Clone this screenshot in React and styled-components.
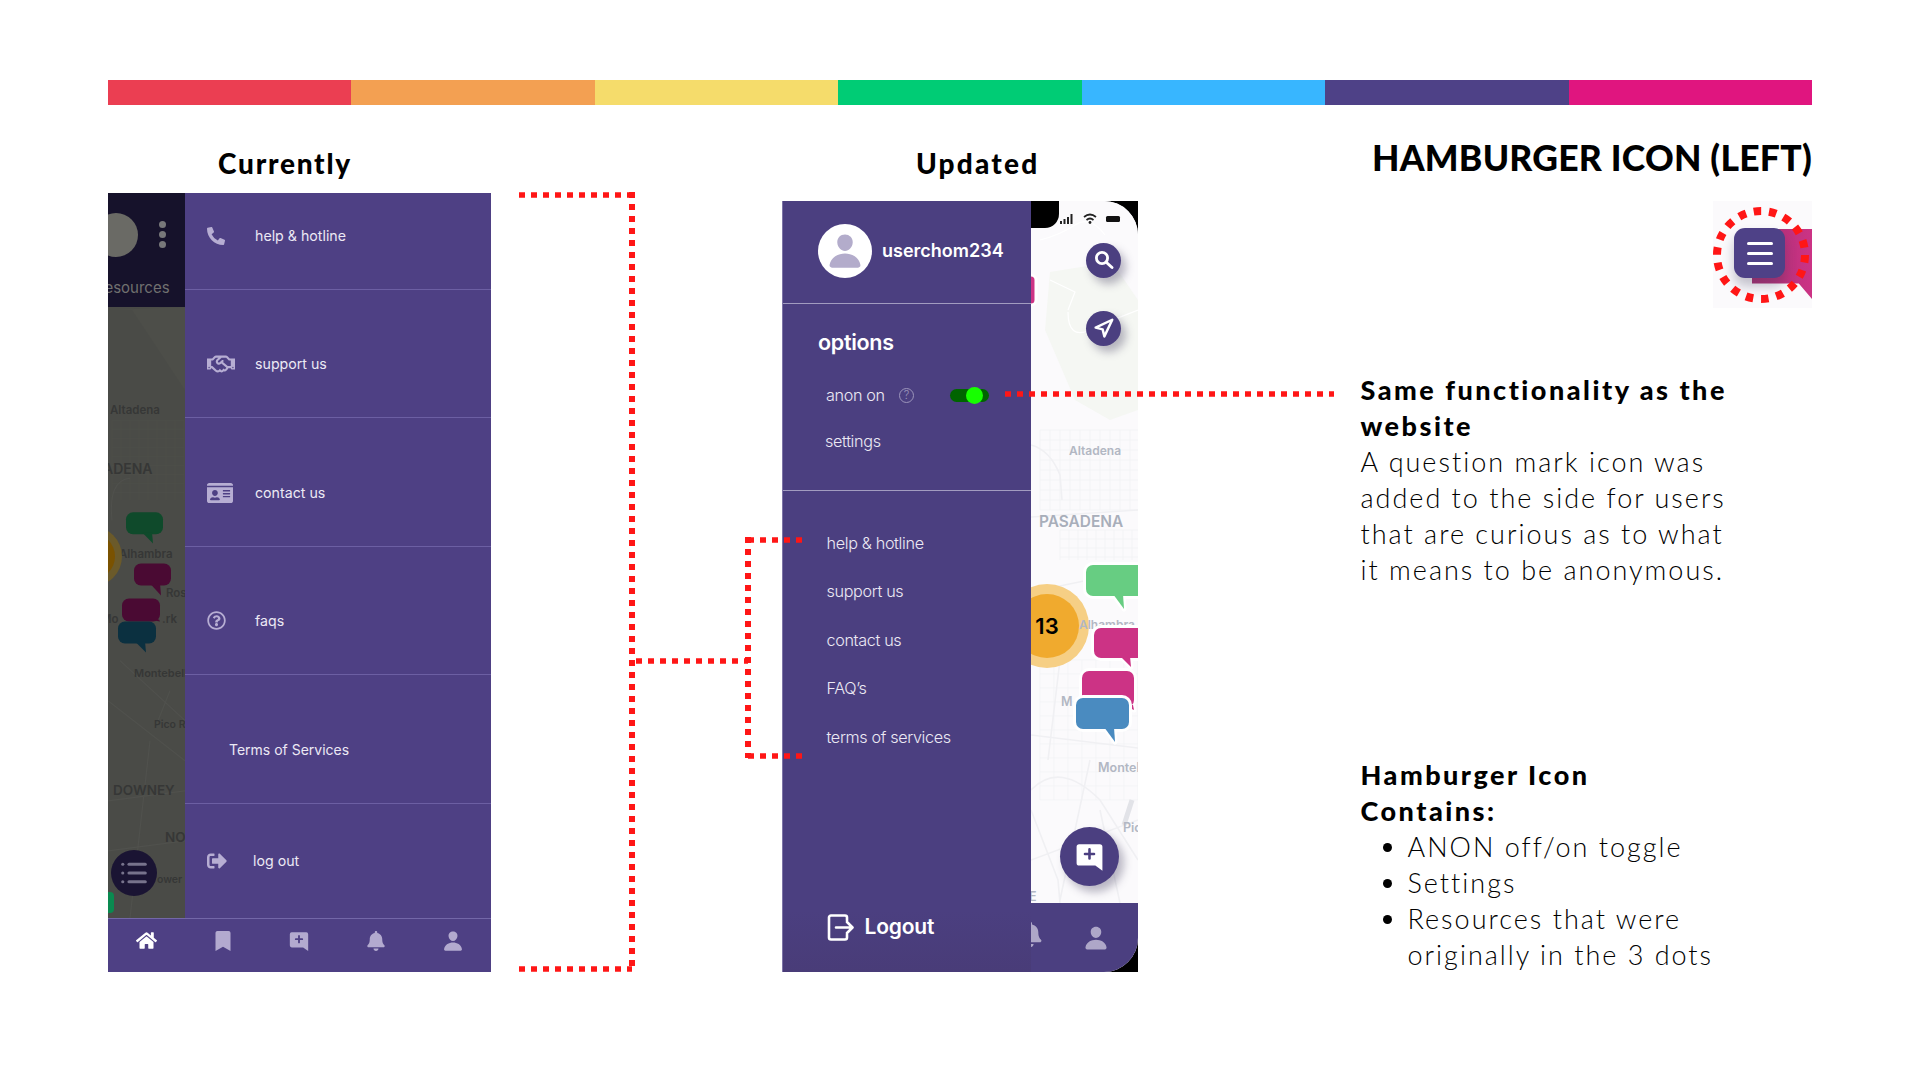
import React from "react";
import styled, { createGlobalStyle } from "styled-components";
import { FaPhoneAlt, FaRegHandshake, FaIdCard, FaRegQuestionCircle, FaSignOutAlt, FaHome, FaBookmark, FaBell } from "react-icons/fa";
import { IoPerson } from "react-icons/io5";
import { Navigation, List } from "lucide-react";

const Global = createGlobalStyle`
  html, body { margin: 0; padding: 0; background: #fff; }
  * { box-sizing: border-box; }
`;

const Page = styled.div`
  position: relative; width: 1920px; height: 1080px; overflow: hidden;
  padding: 80px 108px 0; background: #fff; color: #000; font-family: Lato, sans-serif;
`;
const Rainbow = styled.div`display: flex; height: 25px;`;
const Stripe = styled.div`flex: 1; background: ${p => p.$c};`;
const Columns = styled.div`display: flex; align-items: flex-start;`;
const Column = styled.section`
  width: ${p => p.$w}px; margin-left: ${p => p.$ml || 0}px; flex: none;
  display: flex; flex-direction: column;
`;
const ColTitle = styled.h2`
  margin: 0; height: ${p => p.$h}px; padding: 42px 0 0 ${p => p.$indent}px;
  font: 900 28px/32px Lato, sans-serif; letter-spacing: ${p => p.$ls}px;
`;

/* Old phone */
const OldPhone = styled.div`display: flex; flex-direction: column; height: 779px; background: #4e4084;`;
const OldUpper = styled.div`display: flex; flex: 1; min-height: 0;`;
const Dim = styled.div`width: 77px; flex: none; display: flex; flex-direction: column; background: #4a4b47;`;
const DimTop = styled.div`
  height: 114px; flex: none; background: #16122b; position: relative; overflow: hidden;
  display: flex; flex-direction: column; justify-content: flex-end;
`;
const DimPill = styled.div`
  position: absolute; left: -14px; top: 20px; width: 44px; height: 44px; border-radius: 50%; background: #6a6a65;
`;
const DimDots = styled.div`
  position: absolute; left: 51px; top: 28px; display: flex; flex-direction: column; gap: 3px;
`;
const DimDot = styled.i`display: block; width: 7px; height: 7px; border-radius: 50%; background: #78787a;`;
const DimLabel = styled.div`
  font: 400 15px/18px Inter, sans-serif; color: #70706f; margin: 0 0 10px -9px; white-space: nowrap;
`;
const DimMap = styled.div`flex: 1; position: relative; min-height: 0;`;
const MapSvg = styled.svg`display: block; width: 100%; height: 100%;`;
const DimFab = styled.div`
  position: absolute; left: 3px; top: 543px; width: 46px; height: 46px; border-radius: 50%; background: #1a1433;
  display: flex; align-items: center; justify-content: center; color: #77738c;
`;
const OldDrawer = styled.div`flex: 1; display: flex; flex-direction: column; background: #4e4084;`;
const OldRow = styled.div`
  height: ${p => p.$h}px; flex: none; display: flex; align-items: center;
  padding: ${p => p.$pad || "0"}; padding-left: 22px;
  border-bottom: ${p => (p.$last ? "none" : "1.5px solid #6c5fa3")};
`;
const OldIcon = styled.span`
  width: ${p => p.$w || 48}px; flex: none; display: flex; color: #b7aed3;
`;
const OldLabel = styled.span`
  font: 400 ${p => p.$fs || 14.2}px/18px Inter, sans-serif; color: #ece9f4; margin-left: ${p => p.$ml || 0}px;
`;
const OldNav = styled.nav`
  height: 54px; flex: none; display: flex; border-top: 1.5px solid #7367a8; padding-bottom: 10px;
`;
const OldNavItem = styled.div`
  flex: 1; display: flex; align-items: center; justify-content: center; color: ${p => (p.$on ? "#fff" : "#b3aacf")};
`;

/* New phone */
const NewPhone = styled.div`display: flex; height: 771px; background: #000;`;
const NewDrawer = styled.div`
  width: 249.5px; flex: none; display: flex; flex-direction: column; color: #fff;
  background: linear-gradient(180deg, #4b3f80 0, #4b3f80 92%, #493c78 100%);
  border-left: 1px solid #7d74a6; font-family: Inter, sans-serif;
`;
const Header = styled.div`
  height: 103px; flex: none; display: flex; align-items: center; gap: 10px; padding: 1px 0 3px 35.5px;
  border-bottom: 1.5px solid #a29cc0;
`;
const Avatar = styled.div`
  width: 54px; height: 54px; border-radius: 50%; background: #fff; color: #b3accb; flex: none;
  display: flex; align-items: center; justify-content: center;
`;
const Username = styled.div`font: 600 18px/24px Inter, sans-serif;`;
const Options = styled.div`
  height: 186.5px; flex: none; padding: 24px 0 0 35.5px; border-bottom: 1.5px solid #a29cc0;
`;
const OptionsTitle = styled.div`font: 600 21.5px/28px Inter, sans-serif; letter-spacing: -0.3px;`;
const OptRow = styled.div`display: flex; align-items: center; height: 26px; margin: ${p => p.$m}; font: 300 16.2px/26px Inter, sans-serif; letter-spacing: -0.35px; color: #ece9f4;`;
const HelpDot = styled.span`
  width: 15px; height: 15px; border: 1px solid #9c95bb; border-radius: 50%; color: #9c95bb; margin-left: 14px;
  font: 300 11px/13px Inter, sans-serif; text-align: center;
`;
const Toggle = styled.span`
  position: relative; width: 39px; height: 13px; border-radius: 7px; background: #006400; margin-left: 36px;
`;
const Knob = styled.i`
  position: absolute; left: 16px; top: -2px; width: 17px; height: 17px; border-radius: 50%; background: #17ff00;
`;
const Links = styled.div`flex: 1; display: flex; flex-direction: column; padding: 28px 0 0 44px; min-height: 0;`;
const LinkItem = styled.div`height: 48.5px; flex: none; font: 300 16.2px/48px Inter, sans-serif; letter-spacing: -0.35px; color: #ece9f4;`;
const Logout = styled.div`
  margin-top: auto; display: flex; align-items: center; gap: 11px; height: 28px; margin-bottom: 31px;
  font: 600 21px/28px Inter, sans-serif; letter-spacing: -0.2px;
`;
const MapPane = styled.div`
  flex: 1; min-width: 0; display: flex; flex-direction: column; position: relative; overflow: hidden;
  border-radius: 0 34px 34px 0; background: #fbfafc;
`;
const MapView = styled.div`flex: 1; position: relative; min-height: 0;`;
const RoundBtn = styled.div`
  position: absolute; left: ${p => p.$x}px; top: ${p => p.$y}px; width: ${p => p.$s}px; height: ${p => p.$s}px;
  border-radius: 50%; background: #4b3f80; color: #fff; display: flex; align-items: center; justify-content: center;
  box-shadow: 5px 6px 9px rgba(60, 55, 90, 0.35);
`;
const NewNav = styled.div`
  height: 69px; flex: none; background: #4b3f80; display: flex; align-items: center; color: #aea7c8; position: relative;
`;
const BellPeek = styled.span`position: absolute; left: -13px; top: 19px; display: flex;`;
const PersonSlot = styled.span`position: absolute; left: 52px; top: 22px; display: flex;`;
const Notch = styled.div`
  position: absolute; left: 0; top: 0; width: 28px; height: 27px; background: #000; border-radius: 0 0 14px 0;
`;
const StatusIcons = styled.svg`position: absolute; left: 29px; top: 9px;`;

/* Notes */
const BigHead = styled.h1`
  margin: 0; padding-top: 35px; height: 96px; text-align: right;
  font: 900 35.5px/36px Lato, sans-serif; letter-spacing: 0.25px;
`;
const Thumb = styled.div`
  align-self: flex-end; width: 99px; height: 107px; position: relative; overflow: hidden; background: #fbfafc;
`;
const ThumbPink = styled.div`
  position: absolute; right: 0; top: 28px; width: 60px; height: 70px; background: linear-gradient(90deg,#a82f72,#cc3385);
  clip-path: polygon(0 0, 100% 0, 100% 100%, 78% 78%, 0 78%);
`;
const ThumbBurger = styled.div`
  position: absolute; left: 21px; top: 27px; width: 51px; height: 50px; border-radius: 11px; background: #4e4187;
  display: flex; flex-direction: column; justify-content: center; align-items: center; gap: 7px;
  box-shadow: 0 8px 12px rgba(60,55,90,.3);
`;
const BurgerLine = styled.i`display: block; width: 26px; height: 3px; border-radius: 2px; background: #fff;`;
const Note = styled.div`
  margin-top: ${p => p.$mt}px; font: 300 27px/36px Lato, sans-serif; letter-spacing: 2px;
`;
const NoteHead = styled.div`font: 900 27px/36px Lato, sans-serif; letter-spacing: 2.5px; white-space: pre-line;`;
const NoteList = styled.ul`margin: 0; padding: 0 0 0 47px;`;
const NoteItem = styled.li`padding-left: 0;`;
const Overlay = styled.svg`position: absolute; left: 0; top: 0; pointer-events: none;`;

const colors = ["#eb3e52", "#f3a052", "#f5dc6b", "#00cc75", "#38b6ff", "#4e4187", "#e0157f"];

function Bubble({ x, y, w, h, tip, fill, halo }) {
  const d = `M${tip[0] - 11} ${y + h - 2} L${tip[0]} ${tip[1]} L${tip[0] - 1} ${y + h - 2} Z`;
  return (
    <g>
      {halo && <rect x={x} y={y} width={w} height={h} rx="7" fill="none" stroke={halo} strokeWidth="6" />}
      {halo && <path d={d} fill={halo} stroke={halo} strokeWidth="5" strokeLinejoin="round" />}
      <rect x={x} y={y} width={w} height={h} rx="7" fill={fill} />
      <path d={d} fill={fill} />
    </g>
  );
}

const MapLabel = styled.text`
  font-family: Inter, sans-serif; font-weight: 600;
`;

function gridLines(x0, x1, y0, y1, step, stroke, w) {
  const out = [];
  for (let x = x0; x <= x1; x += step) out.push(<line key={"v" + x} x1={x} y1={y0} x2={x} y2={y1} stroke={stroke} strokeWidth={w} />);
  for (let y = y0; y <= y1; y += step) out.push(<line key={"h" + y} x1={x0} y1={y} x2={x1} y2={y} stroke={stroke} strokeWidth={w} />);
  return out;
}

function OldMap() {
  const t = "#363736";
  return (
    <MapSvg viewBox="108 307 77 610" preserveAspectRatio="none">
      <rect x="108" y="307" width="77" height="610" fill="#4a4b47" />
      <path d="M108 310 L132 310 L185 390 L185 307 Z" fill="#4d4e49" />
      {gridLines(112, 184, 420, 500, 9, "#4f504c", 0.6)}
      <path d="M108 700 L185 760 M120 660 L185 720 M150 740 L130 917 M108 800 L185 790 M108 850 L185 840 M170 690 L158 720" stroke="#50514d" strokeWidth="1.2" fill="none" />
      <path d="M112 520 Q108 480 130 478" stroke="#50514d" strokeWidth="1" fill="none" />
      <MapLabel x="110" y="414" fontSize="11.5" fill={t}>Altadena</MapLabel>
      <MapLabel x="103" y="474" fontSize="14" fill={t}>ADENA</MapLabel>
      <MapLabel x="119" y="558" fontSize="11.5" fill={t}>Alhambra</MapLabel>
      <MapLabel x="166" y="597" fontSize="11.5" fill={t}>Ros</MapLabel>
      <MapLabel x="101" y="622" fontSize="11.5" fill={t}>Mo</MapLabel>
      <MapLabel x="162" y="622" fontSize="11.5" fill={t}>.rk</MapLabel>
      <MapLabel x="134" y="676" fontSize="11" fill={t}>Montebell</MapLabel>
      <MapLabel x="154" y="727" fontSize="10.5" fill={t}>Pico R</MapLabel>
      <MapLabel x="113" y="794" fontSize="13.5" fill={t}>DOWNEY</MapLabel>
      <MapLabel x="165" y="841" fontSize="13.5" fill={t}>NO</MapLabel>
      <MapLabel x="157" y="882" fontSize="10.5" fill={t}>ower</MapLabel>
      <circle cx="92" cy="556" r="30" fill="#6b5a2a" />
      <circle cx="92" cy="556" r="23" fill="#7a5200" />
      <Bubble x={126} y={512} w={37} h={22} tip={[153, 543]} fill="#0f4a2b" />
      <Bubble x={134} y={563} w={37} h={22} tip={[161, 595]} fill="#4a0a33" />
      <Bubble x={122} y={598} w={38} h={23} tip={[160, 621]} fill="#4a0a33" />
      <Bubble x={118} y={621} w={38} h={22} tip={[146, 652]} fill="#0b3040" />
      <rect x="100" y="891" width="14" height="21" rx="4" fill="#0a8a50" />
    </MapSvg>
  );
}

function NewMap() {
  const r = "#f0f0f3";
  const t = "#b2b7c3";
  return (
    <MapSvg viewBox="1031 201 107 702" preserveAspectRatio="none">
      <rect x="1031" y="201" width="107" height="702" fill="#fbfafc" />
      <path d="M1050 272 L1112 262 L1138 300 L1138 410 L1110 420 L1075 400 L1045 330 Z" fill="#f5f7f3" />
      <path d="M1040 240 Q1060 235 1075 225 T1105 235 M1050 280 L1075 292 L1068 310 M1068 312 Q1068 340 1090 330 T1138 310" stroke="#fff" strokeWidth="1.2" fill="none" />
      {gridLines(1040, 1138, 430, 510, 10, "#f1f1f4", 0.7)}
      {gridLines(1060, 1138, 530, 560, 9, "#f1f1f4", 0.7)}
      {gridLines(1040, 1138, 660, 800, 14, "#f2f2f5", 0.7)}
      <path d="M1031 445 Q1050 450 1060 475 L1062 500 M1031 517 L1138 510 M1040 590 L1138 570" stroke={r} strokeWidth="1.6" fill="none" />
      <path d="M1031 735 L1138 748 M1031 790 Q1060 760 1100 800 L1138 860 M1060 660 L1048 760 M1031 810 L1058 880 L1060 903 M1090 760 L1060 900 M1031 860 L1138 820 M1100 810 L1120 903" stroke={r} strokeWidth="1.6" fill="none" />
      <path d="M1132 800 L1124 825" stroke="#e2e3e8" strokeWidth="5" fill="none" />
      <MapLabel x="1069" y="455" fontSize="12" fill={t}>Altadena</MapLabel>
      <MapLabel x="1039" y="527" fontSize="15.4" fill="#a8aeba">PASADENA</MapLabel>
      <MapLabel x="1061" y="706" fontSize="12.5" fill={t}>M</MapLabel>
      <MapLabel x="1098" y="772" fontSize="12.5" fill={t}>Montebello</MapLabel>
      <MapLabel x="1123" y="832" fontSize="12.5" fill={t}>Pico</MapLabel>
      <MapLabel x="1029" y="901" fontSize="12.5" fill={t}>E</MapLabel>
      <rect x="1010" y="275" width="26" height="30" rx="5" fill="#cc3385" stroke="#fff" strokeWidth="3" />
      <circle cx="1047" cy="626" r="42" fill="#f6cf85" />
      <circle cx="1047" cy="626" r="32" fill="#f0aa2e" />
      <MapLabel x="1047" y="634" fontSize="22" fontWeight="700" fill="#000" textAnchor="middle">13</MapLabel>
      <MapLabel x="1079" y="629" fontSize="12" fill={t}>Alhambra</MapLabel>
      <Bubble x={1086} y={565} w={60} h={31} tip={[1124, 609]} fill="#67cd82" halo="#fff" />
      <Bubble x={1094} y={628} w={60} h={30} tip={[1131, 667]} fill="#cc3385" halo="#fff" />
      <Bubble x={1082} y={671} w={52} h={36} tip={[1134, 710]} fill="#cc3385" halo="#fff" />
      <Bubble x={1076} y={698} w={53} h={31} tip={[1115, 742]} fill="#4a8bc0" halo="#fff" />
    </MapSvg>
  );
}

function ChatPlus({ size, bg, fg }) {
  return (
    <svg width={size} height={size} viewBox="0 0 24 24">
      <path d="M4 2.5h16a2 2 0 0 1 2 2v14.5v4l-5.5-4H4a2 2 0 0 1-2-2V4.5a2 2 0 0 1 2-2z" fill={bg} />
      <path d="M12 6.5v7M8.5 10h7" stroke={fg} strokeWidth="2" strokeLinecap="round" />
    </svg>
  );
}

function SearchGlyph() {
  return (
    <svg width="22" height="22" viewBox="0 0 22 22" fill="none" stroke="#fff" strokeLinecap="round">
      <circle cx="9" cy="9" r="5.6" strokeWidth="2.8" />
      <path d="M13.5 13.5L19 18.5" strokeWidth="3" />
    </svg>
  );
}

function LogoutGlyph() {
  return (
    <svg width="27" height="27" viewBox="0 0 27 27" fill="none" stroke="#fff" strokeWidth="2.6" strokeLinecap="round" strokeLinejoin="round">
      <path d="M20 6.5V3.5a2 2 0 0 0-2-2H4a2 2 0 0 0-2 2v20a2 2 0 0 0 2 2h14a2 2 0 0 0 2-2v-3" />
      <path d="M9 13.5h16M20 8l5.5 5.5L20 19" />
    </svg>
  );
}

function Dotted({ d, w = 5.5 }) {
  return <path d={d} fill="none" stroke="#ff1616" strokeWidth={w} strokeDasharray="6 6" />;
}

export default function App() {
  return (
    <Page>
      <Global />
      <Rainbow>{colors.map(c => <Stripe key={c} $c={c} />)}</Rainbow>
      <Columns>
        <Column $w={383}>
          <ColTitle $h={88} $indent={110} $ls={1.75}>Currently</ColTitle>
          <OldPhone>
            <OldUpper>
              <Dim>
                <DimTop>
                  <DimPill />
                  <DimDots><DimDot /><DimDot /><DimDot /></DimDots>
                  <DimLabel>resources</DimLabel>
                </DimTop>
                <DimMap>
                  <OldMap />
                  <DimFab><List size={30} strokeWidth={2.5} /></DimFab>
                </DimMap>
              </Dim>
              <OldDrawer>
                <OldRow $h={97} $pad="0 0 10px">
                  <OldIcon><FaPhoneAlt size={18} /></OldIcon><OldLabel>help &amp; hotline</OldLabel>
                </OldRow>
                <OldRow $h={128.4} $pad="21px 0 0">
                  <OldIcon><FaRegHandshake size={28} /></OldIcon><OldLabel>support us</OldLabel>
                </OldRow>
                <OldRow $h={128.4} $pad="21px 0 0">
                  <OldIcon><FaIdCard size={26} /></OldIcon><OldLabel>contact us</OldLabel>
                </OldRow>
                <OldRow $h={128.4} $pad="21px 0 0">
                  <OldIcon><FaRegQuestionCircle size={19} /></OldIcon><OldLabel>faqs</OldLabel>
                </OldRow>
                <OldRow $h={128.4} $pad="23px 0 0">
                  <OldLabel $ml={22} $fs={14}>Terms of Services</OldLabel>
                </OldRow>
                <OldRow $h={114} $last $pad="0">
                  <OldIcon $w={46}><FaSignOutAlt size={20} /></OldIcon><OldLabel>log out</OldLabel>
                </OldRow>
              </OldDrawer>
            </OldUpper>
            <OldNav>
              <OldNavItem $on><FaHome size={21} /></OldNavItem>
              <OldNavItem><FaBookmark size={20} /></OldNavItem>
              <OldNavItem><ChatPlus size={22} bg="#b3aacf" fg="#4e4084" /></OldNavItem>
              <OldNavItem><FaBell size={20} /></OldNavItem>
              <OldNavItem><IoPerson size={22} /></OldNavItem>
            </OldNav>
          </OldPhone>
        </Column>

        <Column $w={356.5} $ml={290.5}>
          <ColTitle $h={96} $indent={134.5} $ls={2.2}>Updated</ColTitle>
          <NewPhone>
            <NewDrawer>
              <Header>
                <Avatar><IoPerson size={38} /></Avatar>
                <Username>userchom234</Username>
              </Header>
              <Options>
                <OptionsTitle>options</OptionsTitle>
                <OptRow $m="26px 0 0 8px">
                  anon on<HelpDot>?</HelpDot><Toggle><Knob /></Toggle>
                </OptRow>
                <OptRow $m="20px 0 0 7px">settings</OptRow>
              </Options>
              <Links>
                <LinkItem>help &amp; hotline</LinkItem>
                <LinkItem>support us</LinkItem>
                <LinkItem>contact us</LinkItem>
                <LinkItem>FAQ’s</LinkItem>
                <LinkItem>terms of services</LinkItem>
                <Logout><LogoutGlyph />Logout</Logout>
              </Links>
            </NewDrawer>
            <MapPane>
              <MapView>
                <NewMap />
                <Notch />
                <StatusIcons width="62" height="16" viewBox="0 0 62 16">
                  <path d="M0 11h2v3H0zM3.5 9h2v5h-2zM7 7h2v7H7zM10.5 4h2v10h-2z" fill="#222" />
                  <path d="M24 7q6-5 12 0M26.5 10q3.5-3 7 0" stroke="#222" strokeWidth="1.7" fill="none" />
                  <circle cx="30" cy="12.5" r="1.4" fill="#222" />
                  <rect x="46" y="6" width="14" height="6" rx="1.5" fill="#111" />
                </StatusIcons>
                <RoundBtn $x={55} $y={41.5} $s={35}><SearchGlyph /></RoundBtn>
                <RoundBtn $x={55} $y={109.5} $s={35}><Navigation size={21} strokeWidth={2.8} /></RoundBtn>
                <RoundBtn $x={28.5} $y={625.5} $s={59}><ChatPlus size={31} bg="#fff" fg="#4b3f80" /></RoundBtn>
              </MapView>
              <NewNav>
                <BellPeek><FaBell size={25} /></BellPeek>
                <PersonSlot><IoPerson size={26} /></PersonSlot>
              </NewNav>
            </MapPane>
          </NewPhone>
        </Column>

        <Column $w={451.5} $ml={222.5}>
          <BigHead>HAMBURGER ICON (LEFT)</BigHead>
          <Thumb>
            <ThumbPink />
            <ThumbBurger><BurgerLine /><BurgerLine /><BurgerLine /></ThumbBurger>
          </Thumb>
          <Note $mt={64}>
            <NoteHead>{"Same functionality as the\nwebsite"}</NoteHead>
            A question mark icon was<br />added to the side for users<br />that are curious as to what<br />it means to be anonymous.
          </Note>
          <Note $mt={169}>
            <NoteHead>{"Hamburger Icon\nContains:"}</NoteHead>
            <NoteList>
              <NoteItem>ANON off/on toggle</NoteItem>
              <NoteItem>Settings</NoteItem>
              <NoteItem>Resources that were<br />originally in the 3 dots</NoteItem>
            </NoteList>
          </Note>
        </Column>
      </Columns>

      <Overlay width="1920" height="1080" viewBox="0 0 1920 1080">
        <Dotted d="M519 195H632" />
        <Dotted d="M519 969H632" />
        <Dotted d="M632 192V972" w={6} />
        <Dotted d="M636 661H748" />
        <Dotted d="M748 537V758" w={6} />
        <Dotted d="M748 540H802" />
        <Dotted d="M748 756H802" />
        <Dotted d="M1005 394H1334" />
        <circle cx="1761" cy="255" r="44" fill="none" stroke="#ff1616" strokeWidth="8" strokeDasharray="7.5 7.86" />
      </Overlay>
    </Page>
  );
}
